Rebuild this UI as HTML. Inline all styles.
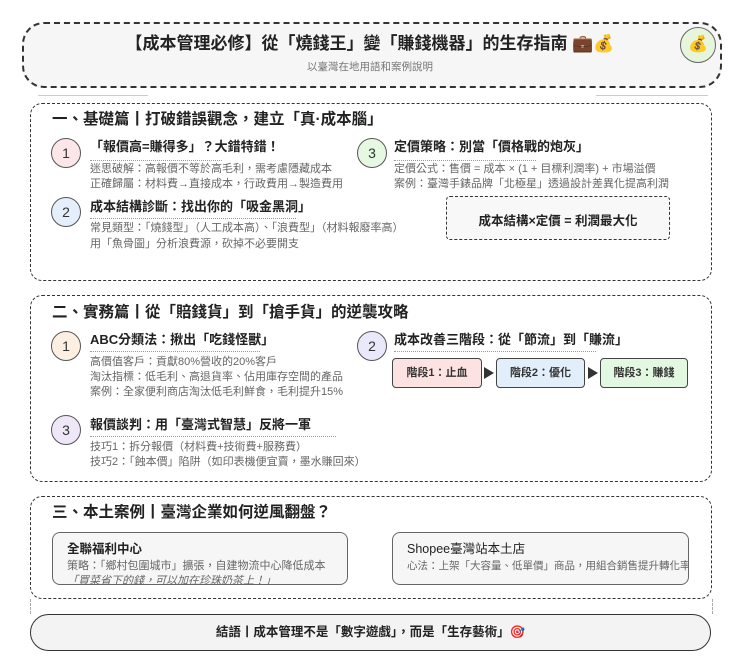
<!DOCTYPE html>
<html><head><meta charset="utf-8"><style>
*{margin:0;padding:0;box-sizing:border-box}
body{width:740px;height:666px;background:#fff;font-family:"Liberation Sans","Noto Sans CJK TC",sans-serif;color:#222;position:relative;overflow:hidden}
.a{position:absolute;white-space:nowrap}
.box{position:absolute;border:1.5px dashed #333;border-radius:12px}
.circ{position:absolute;width:30px;height:30px;border-radius:50%;border:1.2px solid #555;font-size:14px;text-align:center;line-height:28px;color:#333}
.t{position:absolute;font-size:13px;font-weight:bold;white-space:nowrap;line-height:16px}
.u{position:absolute;border-top:1px dotted #999;height:0}
.l{position:absolute;font-size:11px;color:#666;white-space:nowrap;line-height:14px}
.h{position:absolute;font-size:15.5px;font-weight:bold;white-space:nowrap;line-height:20px}
.st{position:absolute;top:358px;height:30px;border:1.2px solid #444;border-radius:4px;font-size:11px;font-weight:bold;text-align:center;line-height:28px;color:#333}
.ar{position:absolute;top:367px;width:0;height:0;border-top:6px solid transparent;border-bottom:6px solid transparent;border-left:10px solid #333}
.card{position:absolute;top:532px;height:53px;border:1.2px solid #666;border-radius:8px;background:#f6f6f6;overflow:hidden}
</style></head><body>
<div class="box" style="left:22px;top:22px;width:700px;height:66px;border-radius:22px;background:#f6f6f6;border-width:2px"></div>
<div class="a" style="left:0;width:740px;top:33px;text-align:center;font-size:17px;font-weight:bold;line-height:22px">【成本管理必修】從「燒錢王」變「賺錢機器」的生存指南 💼💰</div>
<div class="a" style="left:0;width:740px;top:59px;text-align:center;font-size:10.5px;color:#777">以臺灣在地用語和案例說明</div>
<div class="a" style="left:680px;top:27px;width:36px;height:36px;border-radius:50%;border:1px solid #666;background:#e6f6dc;text-align:center;line-height:34px;font-size:16px">💰</div>
<div class="a" style="left:38px;top:95px;width:110px;border-top:1px solid #ccc"></div>
<div class="a" style="left:596px;top:95px;width:112px;border-top:1px solid #ccc"></div>

<div class="box" style="left:30px;top:103px;width:682px;height:178px"></div>
<div class="h" style="left:52px;top:110px">一、基礎篇丨打破錯誤觀念，建立「真·成本腦」</div>
<div class="circ" style="left:51px;top:138px;background:#fde6e8">1</div>
<div class="t" style="left:90px;top:139px">「報價高=賺得多」？大錯特錯！</div>
<div class="u" style="left:90px;top:160px;width:132px"></div>
<div class="l" style="left:90px;top:162px">迷思破解：高報價不等於高毛利，需考慮隱藏成本</div>
<div class="l" style="left:90px;top:177px">正確歸屬：材料費→直接成本，行政費用→製造費用</div>
<div class="circ" style="left:51px;top:197px;background:#e5effb">2</div>
<div class="t" style="left:90px;top:199px">成本結構診斷：找出你的「吸金黑洞」</div>
<div class="u" style="left:90px;top:218px;width:206px"></div>
<div class="l" style="left:90px;top:221px">常見類型：「燒錢型」（人工成本高）、「浪費型」（材料報廢率高）</div>
<div class="l" style="left:90px;top:237px">用「魚骨圖」分析浪費源，砍掉不必要開支</div>
<div class="circ" style="left:357px;top:138px;background:#e6f7e2">3</div>
<div class="t" style="left:394px;top:139px">定價策略：別當「價格戰的炮灰」</div>
<div class="u" style="left:394px;top:160px;width:142px"></div>
<div class="l" style="left:394px;top:162px">定價公式：售價 = 成本 × (1 + 目標利潤率) + 市場溢價</div>
<div class="l" style="left:394px;top:177px">案例：臺灣手錶品牌「北極星」透過設計差異化提高利潤</div>
<div class="box" style="left:446px;top:196px;width:224px;height:44px;border-width:1px;border-radius:4px;background:#f8f8f8"></div>
<div class="a" style="left:446px;width:224px;top:210px;text-align:center;font-size:12.5px;font-weight:bold">成本結構×定價 = 利潤最大化</div>

<div class="box" style="left:30px;top:295px;width:682px;height:187px"></div>
<div class="h" style="left:52px;top:303px">二、實務篇丨從「賠錢貨」到「搶手貨」的逆襲攻略</div>
<div class="circ" style="left:51px;top:331px;background:#fdf0e3">1</div>
<div class="t" style="left:90px;top:332px">ABC分類法：揪出「吃錢怪獸」</div>
<div class="u" style="left:90px;top:351px;width:170px"></div>
<div class="l" style="left:90px;top:355px">高價值客戶：貢獻80%營收的20%客戶</div>
<div class="l" style="left:90px;top:370px">淘汰指標：低毛利、高退貨率、佔用庫存空間的產品</div>
<div class="l" style="left:90px;top:385px">案例：全家便利商店淘汰低毛利鮮食，毛利提升15%</div>
<div class="circ" style="left:357px;top:331px;background:#eae9fb">2</div>
<div class="t" style="left:394px;top:332px">成本改善三階段：從「節流」到「賺流」</div>
<div class="u" style="left:394px;top:351px;width:202px"></div>
<div class="st" style="left:392px;width:90px;background:#fde2e2">階段1：止血</div>
<div class="ar" style="left:484px"></div>
<div class="st" style="left:496px;width:89px;background:#e3eefb">階段2：優化</div>
<div class="ar" style="left:588px"></div>
<div class="st" style="left:600px;width:88px;background:#e3f8e1">階段3：賺錢</div>
<div class="circ" style="left:51px;top:415px;background:#efe6f8">3</div>
<div class="t" style="left:90px;top:417px">報價談判：用「臺灣式智慧」反將一軍</div>
<div class="u" style="left:90px;top:436px;width:246px"></div>
<div class="l" style="left:90px;top:440px">技巧1：拆分報價（材料費+技術費+服務費）</div>
<div class="l" style="left:90px;top:455px">技巧2：「蝕本價」陷阱（如印表機便宜賣，墨水賺回來）</div>

<div class="box" style="left:30px;top:496px;width:682px;height:103px"></div>
<div class="h" style="left:52px;top:503px">三、本土案例丨臺灣企業如何逆風翻盤？</div>
<div class="card" style="left:52px;width:296px">
<div class="t" style="left:14px;top:8px;font-size:12.5px">全聯福利中心</div>
<div class="l" style="left:14px;top:26px">策略：「鄉村包圍城市」擴張，自建物流中心降低成本</div>
<div class="l" style="left:14px;top:41px;font-style:italic;text-decoration:underline">「買菜省下的錢，可以加在珍珠奶茶上！」</div>
</div>
<div class="card" style="left:392px;width:297px">
<div class="t" style="left:14px;top:8px;font-size:12.5px;font-weight:normal;color:#222">Shopee臺灣站本土店</div>
<div class="l" style="left:14px;top:26px;font-size:10.5px">心法：上架「大容量、低單價」商品，用組合銷售提升轉化率</div>
</div>
<div class="a" style="left:30px;top:599px;height:15px;border-left:1px dashed #aaa"></div>
<div class="a" style="left:712px;top:599px;height:15px;border-left:1px dashed #aaa"></div>

<div class="a" style="left:30px;top:614px;width:681px;height:37px;border:1.5px solid #333;border-radius:20px;background:#f3f3f3"></div>
<div class="a" style="left:30px;width:681px;top:624px;text-align:center;font-size:12.5px;font-weight:bold;line-height:17px">結語丨成本管理不是「數字遊戲」，而是「生存藝術」🎯</div>
</body></html>
